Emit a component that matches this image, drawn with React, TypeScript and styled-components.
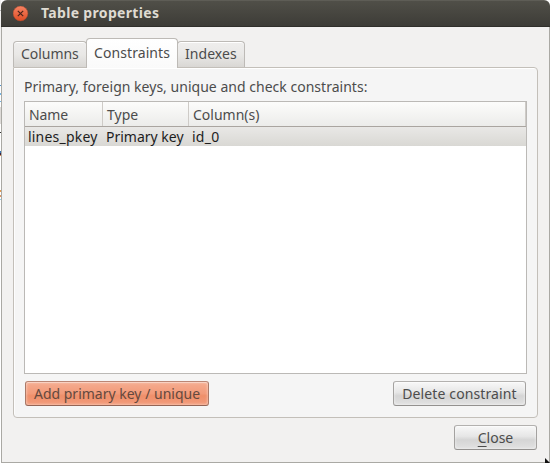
import React from "react";
import styled, { createGlobalStyle } from "styled-components";

const Global = createGlobalStyle`
  * { box-sizing: border-box; }
  body {
    margin: 0;
    overflow: hidden;
    background: #fff;
    font-family: "Noto Sans", "Open Sans", sans-serif;
    font-size: 14px;
    color: #4c4c4c;
  }
`;

/* Sliver of the application that lies behind the dialog */
const Desktop = styled.div`
  width: 550px;
  height: 463px;
  display: flex;
  background:
    linear-gradient(
      to bottom,
      #f2f1f0 0 10px, #b5b5b5 10px 11px, #f2f1f0 11px 70px, #fff 70px 85px,
      #4c93d0 85px 86px, #fff 86px 93px, #72b4e5 93px 95px, #fff 95px 101px,
      #72b4e5 101px 102px, #fff 102px 107px, #dedbd8 107px 124px, #fff 124px 132px,
      #333 132px 133px, #fff 133px 151px, #3478b6 151px 153px, #3c2540 153px 155px,
      #db8d4f 155px 156px, #fff 156px 190px, #e59a4f 190px 192px, #fff 192px 195px,
      #d99667 195px 197px, #fff 197px 199px, #8fd0ee 199px 200px, #fff 200px 463px
    ) 0 0 / 1px 463px no-repeat,
    #fff;
`;

const Dialog = styled.main`
  position: relative;
  width: 549px;
  height: 463px;
  margin-left: 1px;
  display: flex;
  flex-direction: column;
  border-radius: 6px 6px 0 0;
  overflow: hidden;
  background: #f2f1f0;
`;

const TitleBar = styled.header`
  flex: 0 0 27px;
  display: flex;
  align-items: flex-start;
  padding: 3px 12px 0;
  background: linear-gradient(#5e5d56 0 1px, #504f48 1px, #3d3c37 26px, #302f2b 26px);
  color: #dfdbd2;
  font-weight: 700;
`;

const CloseIcon = styled.svg`
  width: 16px;
  height: 16px;
  margin: 3px 12px 0 0;
`;

const Body = styled.div`
  flex: 1;
  display: flex;
  flex-direction: column;
  padding: 11px 11px 0;
  border: 1px solid #aaa9a4;
  border-top: 0;
`;

const Label = styled.span<{ $track?: number }>`
  letter-spacing: ${(p) => p.$track ?? 0}px;
  font-size: 14px;
  line-height: 19px;
  white-space: pre;
`;

const Tabs = styled.nav`
  display: flex;
  align-items: flex-end;
  height: 29px;
`;

const Tab = styled.div<{ $width: number; $active?: boolean }>`
  width: ${(p) => p.$width}px;
  height: ${(p) => (p.$active ? 30 : 26)}px;
  margin-bottom: ${(p) => (p.$active ? -1 : 0)}px;
  padding: ${(p) => (p.$active ? "4px 0 0 7px" : "2px 0 0 7px")};
  border: 1px solid #bdbab6;
  border-bottom: 0;
  border-radius: 4px 4px 0 0;
  background: ${(p) =>
    p.$active ? "linear-gradient(#fff, #fafafa)" : "linear-gradient(#efeeed, #e9e8e6 50%, #d9d7d4)"};
  box-shadow: inset 0 1px 0 #fff;
  z-index: ${(p) => (p.$active ? 1 : 0)};
  & + & { margin-left: ${(p) => (p.$active ? 0 : -1)}px; }
`;

const Panel = styled.section`
  width: 525px;
  height: 351px;
  display: flex;
  flex-direction: column;
  padding: 9px 10px 10px;
  border: 1px solid #c3bfb9;
  border-radius: 0 4px 4px 4px;
  background: linear-gradient(#fff 0 1px, #f5f5f5 1px);
  box-shadow: inset 1px 0 0 #fdfdfd;
`;

const Table = styled.div`
  width: 503px;
  height: 273px;
  margin-top: 5px;
  border: 1px solid #bbb9b6;
  background: #fff;
`;

const Row = styled.div<{ $head?: boolean }>`
  display: grid;
  grid-template-columns: 78px 86px 337px;
  height: ${(p) => (p.$head ? 25 : 19)}px;
  color: ${(p) => (p.$head ? "#4c4c4c" : "#1d1d1d")};
  background: ${(p) =>
    p.$head ? "linear-gradient(#fcfcfb, #ececea)" : "linear-gradient(#e9e8e6, #d9d8d4)"};
  border-bottom: ${(p) => (p.$head ? "1px solid #aaa5a0" : "0")};
`;

const Cell = styled.div<{ $head?: boolean }>`
  display: flex;
  align-items: flex-start;
  padding: ${(p) => (p.$head ? "3px 0 0 4px" : "0 0 0 3px")};
  border-right: ${(p) => (p.$head ? "1px solid #cecbc7" : "1px solid transparent")};
`;

const Actions = styled.div`
  display: flex;
  justify-content: space-between;
  margin: 7px 1px 0;
`;

const Button = styled.button<{ $width: number; $primary?: boolean }>`
  width: ${(p) => p.$width}px;
  height: 25px;
  display: flex;
  justify-content: center;
  align-items: center;
  padding: 0;
  font-family: inherit;
  color: ${(p) => (p.$primary ? "#65493e" : "#4c4c4c")};
  border: 1px solid;
  border-color: ${(p) => (p.$primary ? "#bb8775 #aa7967 #946455" : "#b3b1af #a4a2a0 #93918f")};
  border-radius: 3px;
  background: ${(p) =>
    p.$primary
      ? "linear-gradient(#f5ad91, #f29b7a 50%, #ef8f6a 60%, #f29c7c)"
      : "linear-gradient(#f8f8f8, #e6e6e6 45%, #d5d5d5 60%, #e2e2e2)"};
  box-shadow: inset 0 1px 0 rgba(255, 255, 255, 0.3), inset 0 0 3px rgba(255, 255, 255, 0.65);
`;

const Footer = styled.footer`
  width: 525px;
  display: flex;
  justify-content: flex-end;
  padding-top: 7px;
  padding-right: 1px;
`;

const Mnemonic = styled.span`
  text-decoration: underline;
  text-underline-offset: 3px;
  text-decoration-thickness: 1px;
`;

const Pointer = styled.svg`
  position: absolute;
  right: 0;
  bottom: 0;
  width: 6px;
  height: 5px;
`;

export default function App() {
  return (
    <Desktop>
      <Global />
      <Dialog>
        <TitleBar>
          <CloseIcon viewBox="0 0 16 16">
            <defs>
              <linearGradient id="orb" x2="0" y2="1">
                <stop stopColor="#f58363" />
                <stop offset="1" stopColor="#df4d25" />
              </linearGradient>
            </defs>
            <circle cx="7.5" cy="7.5" r="7.4" fill="url(#orb)" stroke="#a84a30" strokeWidth=".5" />
            <path d="M4.8 4.8 10.2 10.2M10.2 4.8 4.8 10.2" stroke="#4b241b" strokeWidth="1.2" />
          </CloseIcon>
          <Label $track={0.33}>Table properties</Label>
        </TitleBar>
        <Body>
          <Tabs>
            <Tab $width={74}><Label $track={-0.05}>Columns</Label></Tab>
            <Tab $width={92} $active><Label $track={0.08}>Constraints</Label></Tab>
            <Tab $width={68}><Label $track={0.05}>Indexes</Label></Tab>
          </Tabs>
          <Panel>
            <Label $track={0.02}>Primary, foreign keys, unique and check constraints:</Label>
            <Table>
              <Row $head>
                <Cell $head><Label $track={-0.1}>Name</Label></Cell>
                <Cell $head><Label>Type</Label></Cell>
                <Cell $head><Label>Column(s)</Label></Cell>
              </Row>
              <Row>
                <Cell><Label $track={0.2}>lines_pkey</Label></Cell>
                <Cell><Label>Primary key</Label></Cell>
                <Cell><Label $track={0.25}>id_0</Label></Cell>
              </Row>
            </Table>
            <Actions>
              <Button $width={184} $primary><Label>Add primary key / unique</Label></Button>
              <Button $width={133}><Label $track={0.12}>Delete constraint</Label></Button>
            </Actions>
          </Panel>
          <Footer>
            <Button $width={83}><Label><Mnemonic>C</Mnemonic>lose</Label></Button>
          </Footer>
        </Body>
        <Pointer viewBox="0 0 6 5"><path d="M1 0 6 5H1Z" fill="#111" /></Pointer>
      </Dialog>
    </Desktop>
  );
}
